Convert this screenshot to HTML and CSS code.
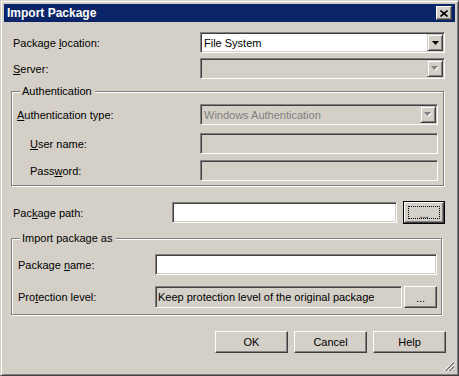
FILE: index.html
```html
<!DOCTYPE html>
<html lang="en">
  <head>
    <meta charset="UTF-8" />
    <title>Import Package</title>
    <link rel="stylesheet" href="styles.css">
  </head>
  <body>
    <div class="dialog">
      <div class="titlebar">
        <span class="title">Import Package</span>
        <span class="close">
          <svg width="8" height="7" viewBox="0 0 8 7"><path d="M0.5 0.5 L7.5 6.5 M7.5 0.5 L0.5 6.5" stroke="#000" stroke-width="1.6" fill="none"/></svg>
        </span>
      </div>
      <div class="body">
        <div class="row">
          <label class="lbl w-top">Package <u>l</u>ocation:</label>
          <div class="combo">
            <span class="value">File System</span>
            <span class="drop"><svg width="7" height="4" viewBox="0 0 7 4"><polygon points="0,0 7,0 3.5,4" fill="#000"/></svg></span>
          </div>
        </div>
        <div class="row mt-5">
          <label class="lbl w-top"><u>S</u>erver:</label>
          <div class="combo off">
            <span class="value"></span>
            <span class="drop"><svg width="8" height="5" viewBox="0 0 8 5"><polygon points="1,1 8,1 4.5,5" fill="#fff"/><polygon points="0,0 7,0 3.5,4" fill="#808080"/></svg></span>
          </div>
        </div>

        <fieldset class="group auth">
          <legend>Authentication</legend>
          <div class="group-body">
            <div class="row">
              <label class="lbl w-auth"><u>A</u>uthentication type:</label>
              <div class="combo off">
                <span class="value grey">Windows Authentication</span>
                <span class="drop"><svg width="8" height="5" viewBox="0 0 8 5"><polygon points="1,1 8,1 4.5,5" fill="#fff"/><polygon points="0,0 7,0 3.5,4" fill="#808080"/></svg></span>
              </div>
            </div>
            <div class="row mt-8">
              <label class="lbl w-auth indent"><u>U</u>ser name:</label>
              <div class="field off"></div>
            </div>
            <div class="row mt-6">
              <label class="lbl w-auth indent">Pass<u>w</u>ord:</label>
              <div class="field off"></div>
            </div>
          </div>
        </fieldset>

        <div class="row tall mt-15">
          <label class="lbl w-path">Pac<u>k</u>age path:</label>
          <div class="field"></div>
          <div class="btn-default">
            <span class="btn-face"><span class="focus">...</span></span>
          </div>
        </div>

        <fieldset class="group import">
          <legend>Import package as</legend>
          <div class="group-body">
            <div class="row">
              <label class="lbl w-imp">Package <u>n</u>ame:</label>
              <div class="field"></div>
            </div>
            <div class="row tall mt-10">
              <label class="lbl w-imp">Pro<u>t</u>ection level:</label>
              <div class="field ro">Keep protection level of the original package</div>
              <div class="btn small">...</div>
            </div>
          </div>
        </fieldset>

        <div class="actions">
          <div class="btn">OK</div>
          <div class="btn">Cancel</div>
          <div class="btn">Help</div>
        </div>
      </div>
      <svg class="grip" width="12" height="12" viewBox="0 0 12 12">
        <path d="M11 1 L1 11 M11 5 L5 11 M11 9 L9 11" stroke="#fff" stroke-width="1" fill="none"/>
        <path d="M11 2 L2 11 M11 3 L3 11 M11 6 L6 11 M11 7 L7 11 M11 10 L10 11" stroke="#808080" stroke-width="1" fill="none"/>
      </svg>
    </div>
  </body>
</html>
```

FILE: styles.css
```css
* {
  box-sizing: border-box;
  margin: 0;
  padding: 0;
}
body {
  font-family: "Liberation Sans", Arial, sans-serif;
  font-size: 11px;
  color: #000;
  background: #d4d0c8;
}
/* window frame */
.dialog {
  position: relative;
  width: 459px;
  height: 376px;
  background: #d4d0c8;
  border: 1px solid;
  border-color: #d4d0c8 #404040 #404040 #d4d0c8;
  box-shadow: inset 1px 1px 0 #fff, inset -1px -1px 0 #808080;
  padding: 3px;
}
.titlebar {
  height: 18px;
  background: #0a246a;
  display: flex;
  align-items: center;
  justify-content: space-between;
  padding: 0 3px 0 3px;
}
.title {
  color: #fff;
  font-weight: bold;
  font-size: 12px;
}
.close {
  width: 16px;
  height: 14px;
  background: #d4d0c8;
  border: 1px solid;
  border-color: #fff #404040 #404040 #fff;
  box-shadow: inset -1px -1px 0 #808080;
  display: flex;
  align-items: center;
  justify-content: center;
}
.body {
  padding: 10px 10px 0 9px;
}
.row {
  display: flex;
  align-items: center;
  height: 21px;
}
.row.tall {
  height: 23px;
}
.mt-5 { margin-top: 5px; }
.mt-6 { margin-top: 6px; }
.mt-8 { margin-top: 8px; }
.mt-10 { margin-top: 10px; }
.mt-15 { margin-top: 15px; }
.lbl {
  flex: none;
  white-space: nowrap;
}
.w-top { width: 187px; }
.w-auth { width: 183px; }
.w-path { width: 159px; }
.w-imp { width: 137px; }
.indent { padding-left: 13px; }

/* sunken controls */
.combo,
.field {
  flex: 1;
  height: 21px;
  background: #fff;
  border: 1px solid;
  border-color: #808080 #fff #fff #808080;
  box-shadow: inset 1px 1px 0 #404040, inset -1px -1px 0 #d4d0c8;
}
.combo {
  display: flex;
  align-items: center;
  padding: 1px;
}
.combo .value {
  flex: 1;
  padding-left: 2px;
  white-space: nowrap;
}
.combo.off,
.field.off,
.field.ro {
  background: #d4d0c8;
}
.grey {
  color: #808080;
}
.field.ro {
  height: 22px;
  display: flex;
  align-items: center;
  padding-left: 2px;
  white-space: nowrap;
  overflow: hidden;
}
.drop {
  width: 16px;
  height: 17px;
  background: #d4d0c8;
  border: 1px solid;
  border-color: #d4d0c8 #404040 #404040 #d4d0c8;
  box-shadow: inset 1px 1px 0 #fff, inset -1px -1px 0 #808080;
  display: flex;
  align-items: center;
  justify-content: center;
}
.drop svg {
  display: block;
}

/* group boxes */
.group {
  border: 1px solid #808080;
  box-shadow: 1px 1px 0 #fff, inset 1px 1px 0 #fff;
  padding: 0;
}
.group legend {
  margin-left: 8px;
  padding: 0 3px 0 2px;
  line-height: 13px;
  background: #d4d0c8;
}
.auth {
  margin: 6px 1px 0 -2px;
}
.auth .group-body {
  padding: 6px 5px 4px 5px;
}
.import {
  margin: 8px 3px 0 -2px;
}
.import .group-body {
  padding: 9px 4px 6px 6px;
}

/* buttons */
.btn,
.btn-face {
  height: 22px;
  background: #d4d0c8;
  border: 1px solid;
  border-color: #fff #404040 #404040 #fff;
  box-shadow: inset -1px -1px 0 #808080, inset 1px 1px 0 #d4d0c8;
  display: flex;
  align-items: center;
  justify-content: center;
}
.btn {
  width: 73px;
}
.btn.small {
  width: 33px;
  margin-left: 2px;
  padding-top: 2px;
}
.btn-default {
  width: 42px;
  height: 23px;
  margin-left: 6px;
  border: 1px solid #000;
}
.btn-default .btn-face {
  width: 100%;
  height: 100%;
  padding: 3px;
}
.focus {
  width: 100%;
  height: 100%;
  border: 1px dotted #000;
  display: flex;
  align-items: center;
  justify-content: center;
  padding-top: 2px;
}
.actions {
  display: flex;
  justify-content: flex-end;
  gap: 6px;
  margin-top: 16px;
  margin-right: -1px;
}
.grip {
  position: absolute;
  right: 3px;
  bottom: 3px;
}
```
